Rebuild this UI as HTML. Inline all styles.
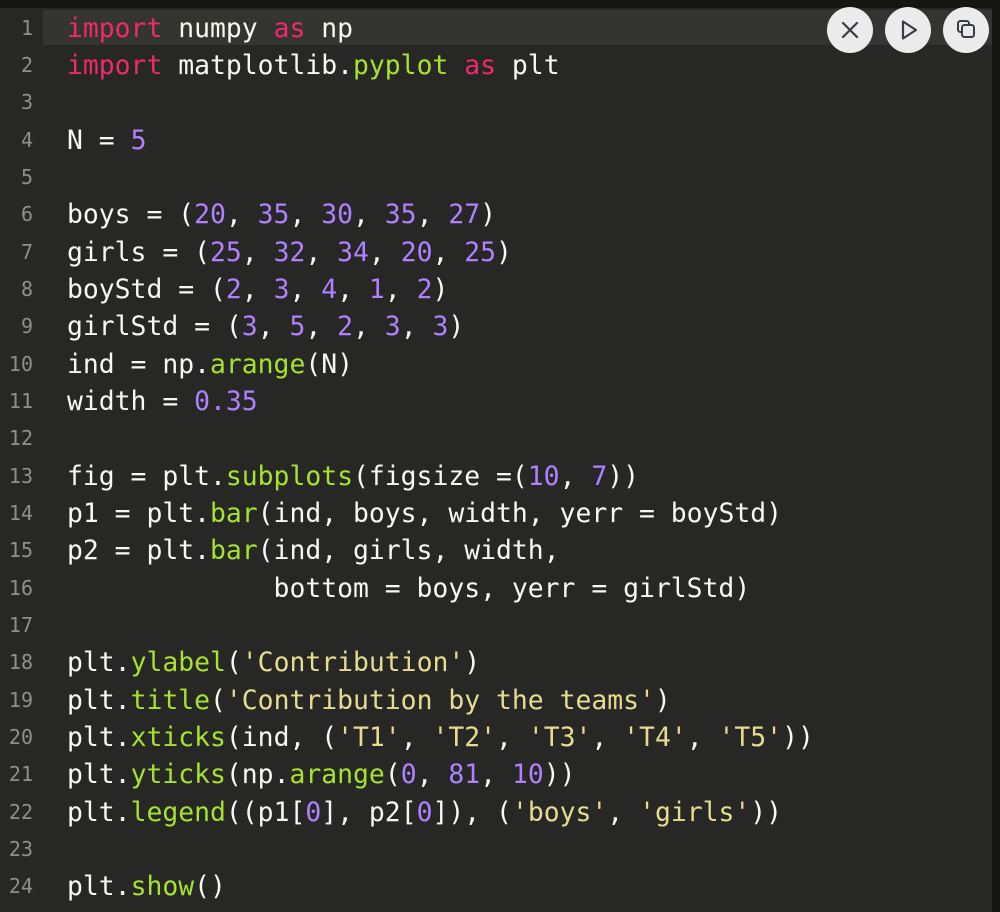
<!DOCTYPE html>
<html><head><style>
html,body{margin:0;padding:0;}
body{width:1000px;height:912px;background:#272725;overflow:hidden;position:relative;font-family:"DejaVu Sans Mono","Liberation Mono",monospace;}
.top{position:absolute;left:0;top:0;width:1000px;height:8px;background:#151514;}
.right{position:absolute;right:0;top:0;width:8px;height:912px;background:#151514;}
.hl{position:absolute;left:43px;top:10px;width:949px;height:35px;background:#343431;}
.code{position:absolute;left:0;top:9.5px;width:1000px;font-size:26.4px;color:#f8f8f2;}
.code div{height:37.35px;line-height:37.35px;position:relative;}
.ln{position:absolute;left:0;top:0;width:33px;text-align:right;color:#8f908a;font-size:20px;}
.t{position:absolute;left:67px;top:0;white-space:pre;}
.k{color:#f0286e}.f{color:#a6e22e}.n{color:#ae81ff}.s{color:#e6dc90}
.btn{position:absolute;top:7px;width:46px;height:46px;border-radius:50%;background:#ebebeb;}
.btn svg{position:absolute;left:0;top:0;}
</style></head><body>
<div class="top"></div>
<div class="hl"></div>
<div class="code">
<div><span class="ln">1</span><span class="t"><span class="k">import</span> numpy <span class="k">as</span> np</span></div>
<div><span class="ln">2</span><span class="t"><span class="k">import</span> matplotlib.<span class="f">pyplot</span> <span class="k">as</span> plt</span></div>
<div><span class="ln">3</span></div>
<div><span class="ln">4</span><span class="t">N = <span class="n">5</span></span></div>
<div><span class="ln">5</span></div>
<div><span class="ln">6</span><span class="t">boys = (<span class="n">20</span>, <span class="n">35</span>, <span class="n">30</span>, <span class="n">35</span>, <span class="n">27</span>)</span></div>
<div><span class="ln">7</span><span class="t">girls = (<span class="n">25</span>, <span class="n">32</span>, <span class="n">34</span>, <span class="n">20</span>, <span class="n">25</span>)</span></div>
<div><span class="ln">8</span><span class="t">boyStd = (<span class="n">2</span>, <span class="n">3</span>, <span class="n">4</span>, <span class="n">1</span>, <span class="n">2</span>)</span></div>
<div><span class="ln">9</span><span class="t">girlStd = (<span class="n">3</span>, <span class="n">5</span>, <span class="n">2</span>, <span class="n">3</span>, <span class="n">3</span>)</span></div>
<div><span class="ln">10</span><span class="t">ind = np.<span class="f">arange</span>(N)</span></div>
<div><span class="ln">11</span><span class="t">width = <span class="n">0.35</span></span></div>
<div><span class="ln">12</span></div>
<div><span class="ln">13</span><span class="t">fig = plt.<span class="f">subplots</span>(figsize =(<span class="n">10</span>, <span class="n">7</span>))</span></div>
<div><span class="ln">14</span><span class="t">p1 = plt.<span class="f">bar</span>(ind, boys, width, yerr = boyStd)</span></div>
<div><span class="ln">15</span><span class="t">p2 = plt.<span class="f">bar</span>(ind, girls, width,</span></div>
<div><span class="ln">16</span><span class="t">             bottom = boys, yerr = girlStd)</span></div>
<div><span class="ln">17</span></div>
<div><span class="ln">18</span><span class="t">plt.<span class="f">ylabel</span>(<span class="s">'Contribution'</span>)</span></div>
<div><span class="ln">19</span><span class="t">plt.<span class="f">title</span>(<span class="s">'Contribution by the teams'</span>)</span></div>
<div><span class="ln">20</span><span class="t">plt.<span class="f">xticks</span>(ind, (<span class="s">'T1'</span>, <span class="s">'T2'</span>, <span class="s">'T3'</span>, <span class="s">'T4'</span>, <span class="s">'T5'</span>))</span></div>
<div><span class="ln">21</span><span class="t">plt.<span class="f">yticks</span>(np.<span class="f">arange</span>(<span class="n">0</span>, <span class="n">81</span>, <span class="n">10</span>))</span></div>
<div><span class="ln">22</span><span class="t">plt.<span class="f">legend</span>((p1[<span class="n">0</span>], p2[<span class="n">0</span>]), (<span class="s">'boys'</span>, <span class="s">'girls'</span>))</span></div>
<div><span class="ln">23</span></div>
<div><span class="ln">24</span><span class="t">plt.<span class="f">show</span>()</span></div>
</div>
<div class="btn" style="left:827px"><svg width="46" height="46"><path d="M16 16L30 30M30 16L16 30" stroke="#3a3d44" stroke-width="2.2" stroke-linecap="round"/></svg></div>
<div class="btn" style="left:885px"><svg width="46" height="46"><path d="M18 14.5L31 23L18 31.5Z" fill="none" stroke="#3a3d44" stroke-width="2.2" stroke-linejoin="round"/></svg></div>
<div class="btn" style="left:943px"><svg width="46" height="46"><rect x="15" y="14" width="11" height="11" rx="2.5" fill="none" stroke="#3a3d44" stroke-width="2"/><rect x="19" y="18" width="12" height="12" rx="2.5" fill="#ebebeb" stroke="#3a3d44" stroke-width="2"/></svg></div>
<div class="right"></div>
</body></html>
